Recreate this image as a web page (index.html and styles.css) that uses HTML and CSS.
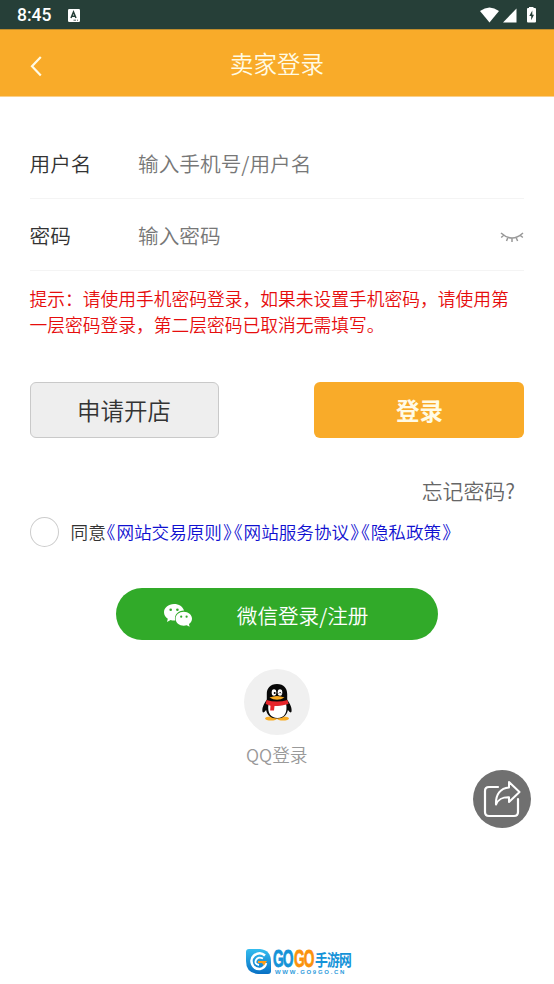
FILE: index.html
```html
<!DOCTYPE html>
<html lang="zh-CN">
<head>
<meta charset="utf-8">
<title>卖家登录</title>
<link rel="stylesheet" href="styles.css">
</head>
<body>
<div class="status">
  <span class="time">8:45</span>
  <svg class="badge-a" width="12" height="13" viewBox="0 0 12 13"><rect width="12" height="13" rx="1.2" fill="#fff"/><path d="M3 9 5.5 3 8 9M4 7.2H7" fill="none" stroke="#263f38" stroke-width="1.5"/><path d="M5.5 11.2H8M9 11.2H10" stroke="#263f38" stroke-width=".8"/></svg>
  <svg class="signals" width="56" height="17" viewBox="0 0 56 17"><path d="M0 4Q9.500-3 19 4L9.500 15.500Z" fill="#fff"/><path d="M36.500 1.500V15.500H23Z" fill="#fff"/><path d="M49 1V0h4.500v1H55q1 0 1 1V14.500q0 1-1 1H48q-1 0-1-1V2q0-1 1-1Z" fill="#fff"/><path d="M52.300 3.500 49.300 9H51.200V13.300L54 7.700H52.300Z" fill="#263f38"/></svg>
</div>
<header class="header">
  <svg class="back" width="14" height="22" viewBox="0 0 14 22"><path d="M12.800 2 4 11.200 12.800 20.400" fill="none" stroke="#fffbe5" stroke-width="2.200"/></svg>
  <h1>卖家登录</h1>
</header>
<main>
  <div class="field"><label>用户名</label><span class="hint">输入手机号/用户名</span></div>
  <div class="field"><label>密码</label><span class="hint">输入密码</span>
    <svg class="eye" width="24" height="12" viewBox="0 0 24 12"><path d="M1 2Q12 12 23 2M4 4 1.200 6.500M8 6.200 6.500 10M12 7V11M16 6.200 17.600 10M20 4 22.800 6.500" fill="none" stroke="#999" stroke-width="1.500"/></svg>
  </div>
  <p class="notice">提示：请使用手机密码登录，如果未设置手机密码，请使用第一层密码登录，第二层密码已取消无需填写。</p>
  <div class="actions"><button class="apply">申请开店</button><button class="login">登录</button></div>
  <div class="forgot">忘记密码?</div>
  <div class="agree"><i class="radio"></i><span>同意</span><a>《<b>网站交易原则</b>》</a><a>《<b>网站服务协议</b>》</a><a>《<b>隐私政策</b>》</a></div>
  <button class="wechat">
    <svg width="28" height="24" viewBox="0 0 28 24"><path d="M10 0C4.400 0 0 3.700 0 8.300c0 2.700 1.500 5 3.800 6.500L3 18l3.600-2c1.500.5 3 .6 4.600.5C10 10.800 14 6.600 20 6.500 19 2.700 14.900 0 10 0Z" fill="#fff"/><path d="M19.800 7.700c-4.600 0-8.200 3.100-8.200 7s3.600 7 8.200 7c1 0 2-.2 2.900-.5L25.600 22.800 25 20c1.800-1.300 3-3.200 3-5.300 0-3.900-3.700-7-8.200-7Z" fill="#fff"/><g fill="#31aa29"><circle cx="6.700" cy="5.800" r="1.300"/><circle cx="13.400" cy="5.800" r="1.300"/><circle cx="17.200" cy="12.700" r="1.100"/><circle cx="22.600" cy="12.700" r="1.100"/></g></svg>
    <span>微信登录/注册</span>
  </button>
  <div class="qq">
    <div class="qq-disc"><svg width="30" height="37" viewBox="0 0 30 37">
      <ellipse cx="9" cy="34.500" rx="6" ry="2" fill="#f8ab22"/><ellipse cx="21" cy="34.500" rx="6" ry="2" fill="#f8ab22"/>
      <path d="M15 0C8 0 4.800 4.500 4.800 10v5.500C3 18.500 0 22.500.4 27c.2 2 1.200 2.200 3.700-1C5 31 9 34.500 15 34.500S25 31 25.900 26c2.500 3.200 3.500 3 3.700 1 .4-4.500-2.600-8.500-4.400-11.500V10C25.200 4.500 22 0 15 0Z" fill="#080808"/>
      <path d="M6.500 20Q15 24 24 19C26 29 22 34 15.500 34S5 29 6.500 20Z" fill="#fff"/>
      <path d="M4.500 16Q15 19 25.500 16L26.500 20Q18 22.500 12.500 22L12 26.500H8.200L8.500 21.700 3.700 20Z" fill="#e7252b"/>
      <ellipse cx="12" cy="8.500" rx="2.300" ry="3.300" fill="#fff"/><ellipse cx="18" cy="8.500" rx="2.300" ry="3.300" fill="#fff"/><circle cx="12.700" cy="9" r="1"/><path d="M16.800 9.500Q18 7 19.300 9.500" fill="none" stroke="#000" stroke-width=".8"/>
      <path d="M7.500 13.500Q15 10.500 22.500 13.500 15 18 7.500 13.500Z" fill="#f8ab22"/>
    </svg></div>
    <span>QQ登录</span>
  </div>
</main>
<div class="share"><svg width="38" height="38" viewBox="0 0 38 38"><path d="M15 7H6Q2 7 2 11V32Q2 36 6 36H31Q35 36 35 32V19" fill="none" stroke="#fff" stroke-width="2.200" stroke-linecap="round"/><path d="M26 2 36.500 12 26 22V17.200C19 17 15.500 19 13 24.500 12.500 14.500 17.500 8 26 7.500Z" fill="none" stroke="#fff" stroke-width="2" stroke-linejoin="round"/></svg></div>
<footer class="brand">
  <svg width="25" height="25" viewBox="0 0 25 25"><defs><linearGradient id="b" x1="0" y1="0" x2="0" y2="1"><stop offset="0" stop-color="#35bdef"/><stop offset="1" stop-color="#0870c4"/></linearGradient></defs><path d="M3 0H14Q25 1 25 13V22Q25 25 22 25H12Q0 24 0 12V3Q0 0 3 0Z" fill="url(#b)"/><path d="M19 6.500Q14 2 8 6.500C3 11 6 20.500 14 20Q19 19 20 14" fill="none" stroke="#fff" stroke-width="2.500"/><path d="M17 9.500Q12 7 10 11T13 16" fill="none" stroke="#fff" stroke-width="1.800"/><path d="M12 12H21L18 16.500 16 14H12Z" fill="#ff9d17"/></svg>
  <div class="brand-text">
    <div class="brand-name"><b class="blue tall">GO</b><b class="orange tall">GO</b><b class="blue cn">手游网</b></div>
    <div class="domain">WWW.GO9GO.CN</div>
  </div>
</footer>
</body>
</html>
```
FILE: styles.css
```css
* { box-sizing: border-box; }
body { margin: 0; height: 984px; overflow: hidden; background: #fff; color: #333; font-family: "Noto Sans CJK SC", sans-serif; font-weight: 350; display: flex; flex-direction: column; }
svg { display: block; flex: none; }
button { font: inherit; padding: 0; border: 0; }
.status { height: 29px; flex: none; background: #263f38; display: flex; align-items: center; padding: 1px 18px 0 17px; color: #fff; }
.time { font: 500 17.5px/28px Roboto, sans-serif; width: 51px; }
.signals { margin-left: auto; }
.header { height: 68px; flex: none; background: #f9ab29; border-top: 1px solid #bd8b2c; border-bottom: 1px solid #fad08b; display: grid; grid-template-columns: 30px 1fr 30px; align-items: center; padding: 0 28px; }
.back { margin-top: 6px; }
h1 { margin: 0; font-size: 23.5px; line-height: 34px; font-weight: 350; text-align: center; color: #fffbe5; }
main { padding: 30px 30px 0 29.6px; display: flex; flex-direction: column; }
.field { height: 72px; display: flex; align-items: center; border-bottom: 1px solid #f4f4f4; font-size: 20.65px; line-height: 30px; }
.field label { width: 108.5px; }
.hint { color: #777; }
.eye { margin-left: auto; margin-top: 5px; }
.notice { margin: 14px -10px 0 0; width: 485px; font-size: 17.75px; line-height: 26px; color: #e60d0d; }
.actions { margin-top: 45px; display: flex; justify-content: space-between; }
.actions button { height: 56px; border-radius: 6px; font-size: 23.5px; line-height: 54px; }
.apply { width: 189px; background: #eee; border: 1px solid #c9c9c9; color: #333; }
.actions .login { width: 210px; background: #f9ab29; color: #fffbe5; font-weight: 700; padding-left: 1px; }
.forgot { margin-top: 37px; padding-right: 9px; text-align: right; font-size: 20.9px; line-height: 30px; color: #666; }
.agree { margin-top: 12px; display: flex; align-items: center; height: 30px; font-size: 17.6px; line-height: 26px; white-space: nowrap; }
.radio { width: 29px; height: 30px; border: 1px solid #ccc; border-radius: 50%; margin-right: 12px; }
.agree span, .agree a { margin-top: -1px; }
.agree span { width: 36px; }
.agree a { display: flex; justify-content: space-between; width: 127.2px; padding-right: 2px; color: #1010d0; font-feature-settings: "halt"; text-spacing-trim: space-all; }
.agree a:last-child { width: 92px; }
.agree b { font-weight: 350; }
.wechat { align-self: center; width: 322px; height: 52px; margin-top: 41px; padding-left: 48px; border-radius: 26px; background: #31aa29; color: #fff; display: flex; align-items: center; gap: 45px; font-size: 20.6px; line-height: 30px; }
.wechat svg { margin-top: 4px; }
.wechat span { margin-top: 2px; }
.qq { align-self: center; margin-top: 29px; display: flex; flex-direction: column; align-items: center; gap: 6px; font-size: 17.7px; line-height: 26px; color: #999; }
.qq-disc { width: 66px; height: 66px; border-radius: 50%; background: #f0f0f0; display: flex; align-items: center; justify-content: center; }
.share { position: absolute; left: 473px; top: 770px; width: 58px; height: 58px; border-radius: 50%; background: #707070; display: flex; align-items: center; justify-content: center; }
.brand { flex: none; margin-top: auto; margin-bottom: 9px; margin-left: 246px; display: flex; gap: 2px; height: 26px; }
.brand-text { display: grid; grid-template-rows: 20px 6px; }
.brand-name { display: flex; height: 20px; align-items: center; white-space: nowrap; }
.tall { font: 700 14.5px/20px "Liberation Sans", sans-serif; width: 21px; letter-spacing: -1px; -webkit-text-stroke: .5px; transform: scale(.95, 1.6); transform-origin: 0 50%; }
.blue { color: #1593d8; }
.orange { color: #fb920c; }
.cn { font-size: 16px; line-height: 20px; letter-spacing: -1px; width: 46px; transform: scaleX(.8); transform-origin: 0 50%; }
.domain { font: 700 6px/6px "Liberation Sans", sans-serif; color: #2e9bdc; letter-spacing: 1.7px; white-space: nowrap; padding-left: 2px; }
```
